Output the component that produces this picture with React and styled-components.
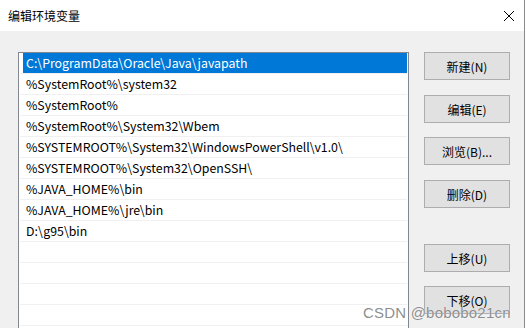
import React from 'react'
import styled, { createGlobalStyle } from 'styled-components'

const Global = createGlobalStyle`
    html, body {
        margin: 0;
        padding: 0;
        background: #ffffff;
    }
    body {
        font-family: "Noto Sans CJK SC", "Liberation Sans", sans-serif;
    }
`

const Window = styled.div`
    position: relative;
    width: 524px;
    height: 328px;
    border-right: 1px solid #8a8a8a;
    background: #f0f0f0;
    overflow: hidden;
    display: flex;
    flex-direction: column;
`

const TitleBar = styled.div`
    height: 31px;
    flex-shrink: 0;
    background: #ffffff;
    display: flex;
    align-items: center;
    justify-content: space-between;
    padding: 0 9px 0 8px;

    h1 {
        margin: 0;
        font-size: 12px;
        font-weight: 400;
        color: #000;
        line-height: 1;
    }
`

const Body = styled.div`
    flex: 1;
    display: flex;
    padding: 21px 0 0 18px;
    gap: 15px;
`

const List = styled.div`
    width: 389px;
    height: 300px;
    flex-shrink: 0;
    border: 1px solid #828790;
    background: #ffffff;
    font-family: "Noto Sans CJK SC", sans-serif;
    font-size: 12.35px;
`

const Row = styled.div`
    height: 20px;
    margin: 0 1px 0 1px;
    border-bottom: 1px solid #f0f0f0;
    display: flex;
`

const Cell = styled.div`
    flex: 1;
    margin-left: 3px;
    padding-left: 3px;
    display: flex;
    align-items: center;
    white-space: nowrap;
    color: ${p => (p.selected ? '#ffffff' : '#000000')};
    background: ${p => (p.selected ? '#0078d7' : 'transparent')};
`

const Buttons = styled.div`
    display: flex;
    flex-direction: column;
`

const Button = styled.button`
    width: 86px;
    height: 28px;
    margin-top: ${p => p.top}px;
    border: 1px solid #adadad;
    background: #e1e1e1;
    font-family: "Noto Sans CJK SC", sans-serif;
    font-size: 12px;
    color: #000;
    padding: 0;
    cursor: pointer;
`

const Watermark = styled.div`
    position: absolute;
    left: 363px;
    top: 304px;
    font-family: "Liberation Sans", sans-serif;
    font-size: 15px;
    color: rgba(120, 120, 120, 0.85);
    letter-spacing: 0.2px;
    text-shadow: 0 0 1px #fff;
`

const paths = [
    'C:\\ProgramData\\Oracle\\Java\\javapath',
    '%SystemRoot%\\system32',
    '%SystemRoot%',
    '%SystemRoot%\\System32\\Wbem',
    '%SYSTEMROOT%\\System32\\WindowsPowerShell\\v1.0\\',
    '%SYSTEMROOT%\\System32\\OpenSSH\\',
    '%JAVA_HOME%\\bin',
    '%JAVA_HOME%\\jre\\bin',
    'D:\\g95\\bin',
    '', '', '', '', ''
]

const buttons = [
    { label: '新建(N)', top: 0 },
    { label: '编辑(E)', top: 15 },
    { label: '浏览(B)...', top: 14 },
    { label: '删除(D)', top: 15 },
    { label: '上移(U)', top: 36 },
    { label: '下移(O)', top: 14 },
]

function CloseIcon() {
    return (
        <svg width="12" height="12" viewBox="0 0 12 12">
            <path d="M1 1 L11 11 M11 1 L1 11" stroke="#000" strokeWidth="1" fill="none" />
        </svg>
    )
}

function App() {
    return (
        <Window>
            <Global />
            <TitleBar>
                <h1>编辑环境变量</h1>
                <CloseIcon />
            </TitleBar>
            <Body>
                <List>
                    {paths.map((p, i) => (
                        <Row key={i}>
                            <Cell selected={i === 0}>{p}</Cell>
                        </Row>
                    ))}
                </List>
                <Buttons>
                    {buttons.map(b => (
                        <Button key={b.label} top={b.top}>{b.label}</Button>
                    ))}
                </Buttons>
            </Body>
            <Watermark>CSDN @bobobo21cn</Watermark>
        </Window>
    )
}

export default App
